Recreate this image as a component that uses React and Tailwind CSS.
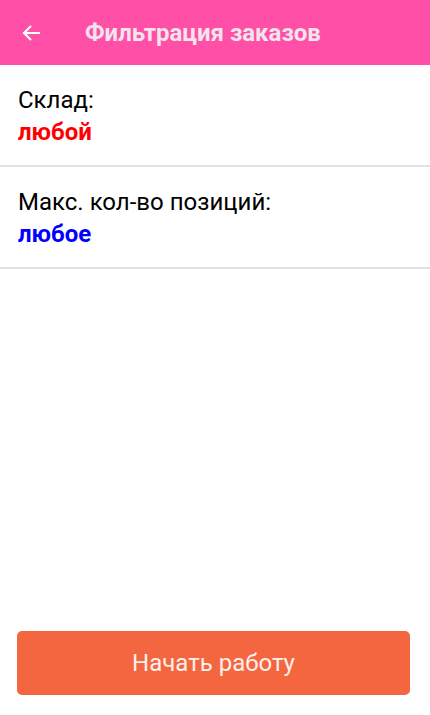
import React from 'react';

const rows = [
  { label: 'Склад:', value: 'любой', color: 'text-[#ff0000]' },
  { label: 'Макс. кол-во позиций:', value: 'любое', color: 'text-[#0000ff]' },
];

export default function App() {
  return (
    <div className="flex h-[715px] w-[430px] flex-col bg-white font-['Roboto',sans-serif]">
      <header className="flex h-[65px] shrink-0 items-center bg-[#ff4fa7]">
        <button className="ml-[20px] flex h-[24px] w-[24px] items-center justify-center text-white">
          <svg width="24" height="24" viewBox="0 0 24 24" fill="none">
            <path d="M20 12H4.5M11 5l-7 7 7 7" stroke="currentColor" strokeWidth="2.2" />
          </svg>
        </button>
        <h1 className="ml-[41px] text-[24px] font-bold text-[#f3e4ec]">Фильтрация заказов</h1>
      </header>

      <div className="flex flex-col">
        {rows.map((row) => (
          <div key={row.label} className="border-b-2 border-[#e2e2e2] px-[18px] pb-[17px] pt-[19px]">
            <div className="text-[24px] leading-[32px] text-black">{row.label}</div>
            <div className={`text-[24px] font-bold leading-[32px] ${row.color}`}>{row.value}</div>
          </div>
        ))}
      </div>

      <div className="flex-1" />

      <div className="mb-[20px] ml-[17px] mr-[20px]">
        <button className="flex h-[64px] w-full items-center justify-center rounded-[5px] bg-[#f4663f] text-[24px] text-[#fdf0ec]">
          Начать работу
        </button>
      </div>
    </div>
  );
}
